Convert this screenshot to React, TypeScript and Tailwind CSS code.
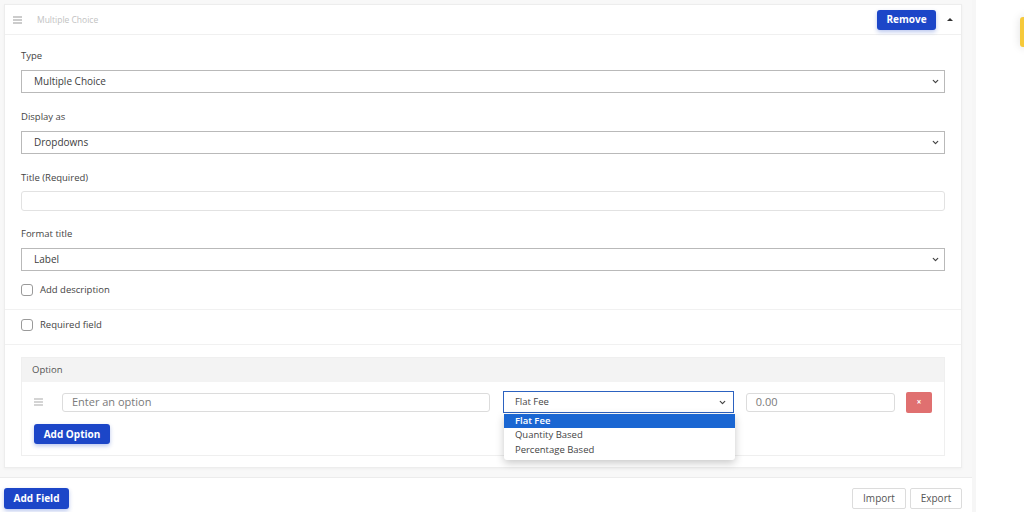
import React from 'react';
import { ChevronDown } from 'lucide-react';

const font = { fontFamily: '"Open Sans", "Liberation Sans", sans-serif' };

function Bars({ className = '' }: { className?: string }) {
  return (
    <svg width="9" height="8" viewBox="0 0 9 8" className={className}>
      <path d="M0 1h9M0 4h9M0 7h9" stroke="currentColor" strokeWidth="1.2" />
    </svg>
  );
}

function FakeSelect({ value }: { value: string }) {
  return (
    <div className="flex items-center justify-between h-[23px] border border-[#b9b9b9] bg-white pl-3 pr-[4px] text-[10px] text-[#3d3d3d] font-medium">
      <span>{value}</span>
      <ChevronDown size={9} strokeWidth={3.2} className="text-[#444]" />
    </div>
  );
}

function Label({ children }: { children: React.ReactNode }) {
  return <div className="h-3 leading-3 text-[9.5px] text-[#444] mb-2">{children}</div>;
}

function Check({ label }: { label: string }) {
  return (
    <label className="flex items-center gap-[7px] h-3">
      <span className="w-3 h-3 rounded-[3px] border border-[#9a9a9a] bg-white" />
      <span className="text-[9.5px] text-[#444]">{label}</span>
    </label>
  );
}

export default function App() {
  return (
    <div className="relative w-[1024px] h-[512px] overflow-hidden bg-white flex" style={font}>
      {/* main column */}
      <div className="w-[972px] flex flex-col">
        <div className="bg-[#f8f8f8] pl-1 pt-1 pr-[10px] pb-[9px] border-b border-[#ececec]">
          <div className="w-[958px] bg-white border border-[#ededed] shadow-[0_1px_3px_rgba(0,0,0,0.04)]">
            {/* header */}
            <div className="h-[30px] flex items-center border-b border-[#f0f0f0] pl-2 pr-[8px]">
              <Bars className="text-[#9a9a9a]" />
              <span className="ml-[15px] mt-[2px] text-[8.5px] text-[#c2c2c2]">Multiple Choice</span>
              <div className="ml-auto flex items-center">
                <button className="h-5 w-[59px] rounded-[3px] bg-[#1c46c8] text-white text-[10px] font-bold shadow-[0_2px_4px_rgba(28,70,200,0.3)]">
                  Remove
                </button>
                <span className="ml-[11px] w-0 h-0 border-l-[3px] border-r-[3px] border-b-[3px] border-l-transparent border-r-transparent border-b-[#333]" />
              </div>
            </div>

            {/* fields */}
            <div className="px-4 pt-[15px] pb-[13px] border-b border-[#f1f1f1]">
              <Label>Type</Label>
              <FakeSelect value="Multiple Choice" />
              <div className="h-[18px]" />
              <Label>Display as</Label>
              <FakeSelect value="Dropdowns" />
              <div className="h-[18px]" />
              <div className="h-3 leading-3 text-[9.5px] text-[#444] mb-[7px]">Title (Required)</div>
              <div className="h-5 border border-[#e2e2e2] rounded-[3px] bg-white" />
              <div className="h-[17px]" />
              <Label>Format title</Label>
              <FakeSelect value="Label" />
              <div className="h-[13px]" />
              <Check label="Add description" />
            </div>

            <div className="px-4 pt-[9px] pb-[13px] border-b border-[#f1f1f1]">
              <Check label="Required field" />
            </div>

            {/* options */}
            <div className="px-4 pt-[12px] pb-[11px]">
              <div className="border border-[#efefef]">
                <div className="h-6 bg-[#f3f3f3] flex items-center pl-[10px] text-[9.5px] text-[#555]">Option</div>
                <div className="px-3 pt-[9px] pb-[11px]">
                  <div className="flex items-center h-[22px]">
                    <Bars className="text-[#aaa]" />
                    <div className="ml-[19px] w-[430px] h-[19px] border border-[#dcdcdc] rounded-[3px] flex items-center pl-[9px] text-[11px] text-[#7a7a7a]">
                      Enter an option
                    </div>
                    <div className="relative ml-[13px] w-[232px]">
                      <div className="h-[22px] border border-[#2c62c0] flex items-center justify-between pl-[11px] pr-[6px] text-[9.5px] text-[#444]">
                        <span>Flat Fee</span>
                        <ChevronDown size={9} strokeWidth={3.2} className="text-[#444]" />
                      </div>
                      <div className="absolute left-[1px] top-[23px] w-[231px] bg-white rounded-b-[3px] shadow-[0_3px_8px_rgba(0,0,0,0.22)] pb-[2px] z-10 text-[9.5px]">
                        <div className="h-[14px] bg-[#1a66d2] text-white font-semibold flex items-center pl-[11px]">Flat Fee</div>
                        <div className="h-[15px] text-[#444] flex items-center pl-[11px]">Quantity Based</div>
                        <div className="h-[15px] text-[#444] flex items-center pl-[11px]">Percentage Based</div>
                      </div>
                    </div>
                    <div className="ml-3 w-[150px] h-[19px] border border-[#dcdcdc] rounded-[3px] flex items-center pl-[9px] text-[11px] text-[#7a7a7a]">
                      0.00
                    </div>
                    <button className="ml-[11px] w-[26px] h-[21px] rounded-[2px] bg-[#e07070] text-white text-[8px] font-bold flex items-center justify-center">
                      ×
                    </button>
                  </div>
                  <button className="mt-[11px] h-5 w-[76px] rounded-[3px] bg-[#1c46c8] text-white text-[10px] font-bold shadow-[0_2px_4px_rgba(28,70,200,0.3)]">
                    Add Option
                  </button>
                </div>
              </div>
            </div>
          </div>
        </div>

        {/* bottom actions */}
        <div className="flex items-center pl-1 pr-[10px] pt-[10px]">
          <button className="h-[21px] w-[65px] rounded-[3px] bg-[#1c46c8] text-white text-[10px] font-bold shadow-[0_2px_4px_rgba(28,70,200,0.3)]">
            Add Field
          </button>
          <div className="ml-auto flex gap-1">
            <button className="h-[21px] w-[54px] border border-[#dcdcdc] rounded-[2px] bg-white text-[10px] text-[#555]">Import</button>
            <button className="h-[21px] w-[52px] border border-[#dcdcdc] rounded-[2px] bg-white text-[10px] text-[#555]">Export</button>
          </div>
        </div>
      </div>

      {/* right side strip */}
      <div className="flex-1 border-l-[4px] border-[#f6f6f6] relative">
        <div className="absolute left-[44px] top-[17px] w-6 h-[30px] rounded-[3px] bg-[#f6c93a] shadow-[0_0_10px_rgba(0,0,0,0.12)]" />
      </div>
    </div>
  );
}
